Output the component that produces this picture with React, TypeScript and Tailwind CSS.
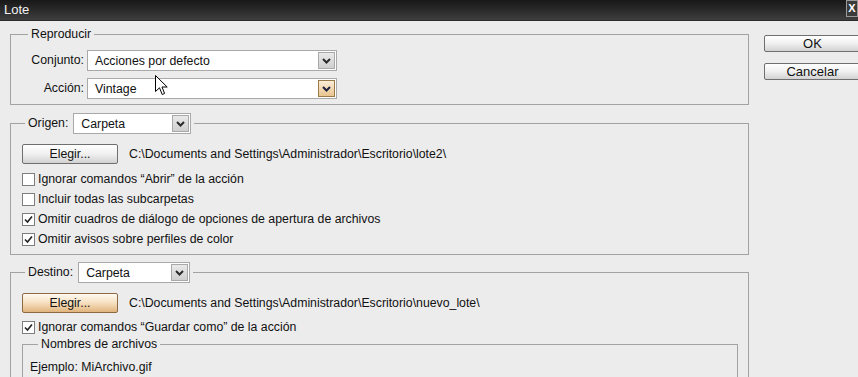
import React from 'react'

function Chevron({ color = '#222' }: { color?: string }) {
  return (
    <svg width="9" height="6" viewBox="0 0 9 6">
      <path d="M1 1 L4.5 4.5 L8 1" fill="none" stroke={color} strokeWidth="2" />
    </svg>
  )
}

function Select({ value, width, hot = false }: { value: string; width: string; hot?: boolean }) {
  return (
    <div className={`${width} h-[21px] flex items-stretch bg-white border border-[#a9a9a9] p-px`}>
      <span className="flex-1 pl-[6px] leading-[19px] truncate">{value}</span>
      <span
        className={
          hot
            ? 'w-[17px] flex items-center justify-center border border-[#9a7a4a] bg-gradient-to-b from-[#fbeed8] to-[#e9c48e]'
            : 'w-[17px] flex items-center justify-center border border-[#a8a8a8] bg-gradient-to-b from-[#e9e9e9] to-[#cfcfcf]'
        }
      >
        <Chevron color={hot ? '#1e2340' : '#2a2a2a'} />
      </span>
    </div>
  )
}

function Button({ label, hot = false, className = '' }: { label: string; hot?: boolean; className?: string }) {
  return (
    <div
      className={`${className} shrink-0 flex items-center justify-center rounded-[2px] border ${
        hot
          ? 'border-[#8c6a42] bg-gradient-to-b from-[#fffaf2] via-[#f6dfbf] to-[#e1b47c]'
          : 'border-[#6f6f6f] bg-gradient-to-b from-[#ffffff] via-[#f0f0f0] to-[#d2d2d2]'
      }`}
    >
      {label}
    </div>
  )
}

function Check({ label, checked = false }: { label: string; checked?: boolean }) {
  return (
    <div className="h-[20px] flex items-center gap-[3px]">
      <span className="w-[13px] h-[13px] bg-white border border-[#7e7e7e] flex items-center justify-center">
        {checked && (
          <svg width="9" height="9" viewBox="0 0 9 9">
            <path d="M1 4.5 L3.5 7 L8 1.5" fill="none" stroke="#222" strokeWidth="1.6" />
          </svg>
        )}
      </span>
      <span>{label}</span>
    </div>
  )
}

function Cursor() {
  return (
    <svg className="absolute left-[155px] top-[75px]" width="13" height="21" viewBox="0 0 13 21">
      <path
        d="M0.5 0.5 L0.5 16.5 L4.5 12.8 L7.2 19.5 L9.6 18.5 L7 12 L12.2 12 Z"
        fill="#fff"
        stroke="#000"
        strokeWidth="1"
        strokeLinejoin="round"
      />
    </svg>
  )
}

export default function App() {
  return (
    <div className="relative w-[858px] h-[377px] overflow-hidden bg-[#ececec] text-[12.3px] text-[#111] font-['Liberation_Sans',Arial,sans-serif]">
      <div className="h-[21px] flex items-center bg-gradient-to-b from-[#181818] to-[#3e3e3e] text-[#f2f2f2] border-b border-[#2a2a2a]">
        <span className="pl-[4px] text-[13px]">Lote</span>
        <span className="ml-auto self-start w-[12px] h-[17px] border border-[#9a9a9a] bg-[#3a3a3a] flex items-center justify-center text-white text-[11px] font-bold">
          X
        </span>
      </div>

      <div className="flex">
        <div className="ml-[10px] w-[739px] shrink-0 flex flex-col">
          <fieldset className="mt-[6px] border border-[#a2a2a2] px-0 pt-[9px] pb-[5px]">
            <legend className="ml-[17px] px-[3px] leading-[14px]">Reproducir</legend>
            <div className="flex flex-col gap-[7px]">
              <div className="flex items-center gap-[3px]">
                <span className="w-[73px] text-right">Conjunto:</span>
                <Select value="Acciones por defecto" width="w-[250px]" />
              </div>
              <div className="flex items-center gap-[3px]">
                <span className="w-[73px] text-right">Acción:</span>
                <Select value="Vintage" width="w-[250px]" hot />
              </div>
            </div>
          </fieldset>

          <fieldset className="mt-[8px] border border-[#a2a2a2] px-0 pt-[10px] pb-[5px]">
            <legend className="ml-[14px] px-[3px] flex items-center gap-[5px]">
              <span>Origen:</span>
              <Select value="Carpeta" width="w-[118px]" />
            </legend>
            <div className="pl-[11px] flex flex-col">
              <div className="flex items-center gap-[11px] mb-[5px]">
                <Button label="Elegir..." className="w-[96px] h-[20px]" />
                <span>C:\Documents and Settings\Administrador\Escritorio\lote2\</span>
              </div>
              <Check label="Ignorar comandos “Abrir” de la acción" />
              <Check label="Incluir todas las subcarpetas" />
              <Check label="Omitir cuadros de diálogo de opciones de apertura de archivos" checked />
              <Check label="Omitir avisos sobre perfiles de color" checked />
            </div>
          </fieldset>

          <fieldset className="mt-[7px] border border-[#a2a2a2] px-0 pt-[10px] pb-[5px]">
            <legend className="ml-[14px] px-[3px] flex items-center gap-[5px]">
              <span>Destino:</span>
              <Select value="Carpeta" width="w-[112px]" />
            </legend>
            <div className="pl-[11px] flex flex-col">
              <div className="flex items-center gap-[11px] mb-[4px]">
                <Button label="Elegir..." className="w-[96px] h-[20px]" hot />
                <span>C:\Documents and Settings\Administrador\Escritorio\nuevo_lote\</span>
              </div>
              <Check label="Ignorar comandos “Guardar como” de la acción" checked />
              <fieldset className="mr-[10px] border border-[#a2a2a2] px-0 pt-[9px] pb-[10px]">
                <legend className="ml-[15px] px-[3px] leading-[14px]">Nombres de archivos</legend>
                <div className="pl-[7px] leading-[14px]">Ejemplo: MiArchivo.gif</div>
              </fieldset>
            </div>
          </fieldset>
        </div>

        <div className="ml-[15px] shrink-0 pt-[14px] flex flex-col gap-[11px]">
          <Button label="OK" className="w-[97px] h-[17px] text-[13px]" />
          <Button label="Cancelar" className="w-[97px] h-[17px] text-[13px]" />
        </div>
      </div>

      <Cursor />
    </div>
  )
}
